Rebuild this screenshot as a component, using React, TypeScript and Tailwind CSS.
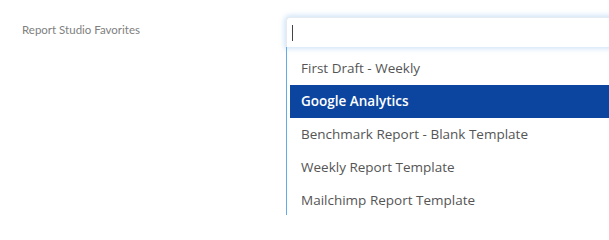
import { useState } from "react"

const options = [
  "First Draft - Weekly",
  "Google Analytics",
  "Benchmark Report - Blank Template",
  "Weekly Report Template",
  "Mailchimp Report Template",
]

export default function App() {
  const [active, setActive] = useState(1)

  return (
    <div className="w-[609px] h-[215px] overflow-hidden bg-white flex font-['Lato',sans-serif]">
      <div className="w-[286px] shrink-0 pl-[22px] pt-[22px]">
        <p className="text-[11.5px] leading-[16px] text-[#808080]">Report Studio Favorites</p>
      </div>
      <div className="flex-1 pt-[17px] min-w-0">
        <div className="h-[30px] w-[340px] rounded-tl-[4px] bg-white border-t border-l border-[#e6ebf0] shadow-[0_0_5px_2px_rgba(130,180,235,0.35)] flex items-center pl-[5px]">
          <div className="w-px h-[16px] bg-[#444]" />
        </div>
        <ul className="w-[340px] border-l border-[#62aae8] pt-[5px] pl-[3px] font-['Open_Sans',sans-serif]">
          {options.map((o, i) => (
            <li
              key={o}
              onMouseEnter={() => setActive(i)}
              className={`h-[33px] flex items-center pl-[11px] text-[13.5px] ${
                active === i ? "bg-[#0c45a0] text-white font-semibold" : "text-[#555]"
              }`}
            >
              {o}
            </li>
          ))}
        </ul>
      </div>
    </div>
  )
}
